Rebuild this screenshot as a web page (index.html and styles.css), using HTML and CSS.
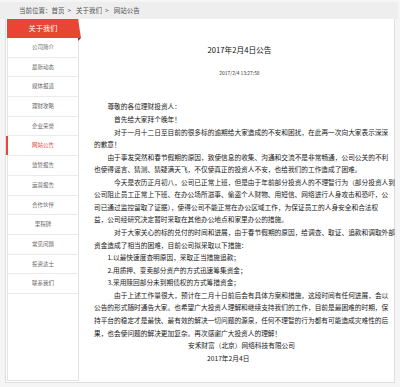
FILE: index.html
```html
<!DOCTYPE html>
<html lang="zh-CN">
<head>
<meta charset="utf-8">
<title>网站公告</title>
<link rel="stylesheet" href="styles.css">
</head>
<body>
<div class="page">
  <div class="crumb">当前位置：<span class="lnk">首页</span><span class="sep">&gt;</span><span class="lnk">关于我们</span><span class="sep">&gt;</span><span class="lnk">网站公告</span></div>
  <div class="main">
    <aside class="side">
      <div class="side-top">
        <div class="side-head">关于我们</div>
        <i class="fold"></i>
      </div>
      <ul class="nav">
        <li>公司简介</li>
        <li>最新动态</li>
        <li>媒体报道</li>
        <li>理财攻略</li>
        <li>企业荣誉</li>
        <li class="on">网站公告</li>
        <li>监管报告</li>
        <li>运营报告</li>
        <li>合作伙伴</li>
        <li>里程碑</li>
        <li>常见问题</li>
        <li>投资达士</li>
        <li>联系我们</li>
      </ul>
    </aside>
    <section class="content">
      <h1 class="title">2017年2月4日公告</h1>
      <div class="date">2017/2/4 13:27:58</div>
      <div class="text">
        <p class="i2">尊敬的各位理财投资人：</p>
        <p class="i3">首先给大家拜个晚年！</p>
        <p class="i3">对于一月十二日至目前的很多标的逾期给大家造成的不安和困扰，在此再一次向大家表示深深<br>的歉意！</p>
        <p class="i2">由于事发突然和春节假期的原因，致使信息的收集、沟通和交流不是非常畅通，公司公关的不利<br>也使得谣言、猜测、猜疑满天飞，不仅使真正的投资人不安，也给我们的工作造成了困难。</p>
        <p class="i3">今天是农历正月初八，公司已正常上班，但是由于年前部分投资人的不理智行为（部分投资人到<br>公司阻止员工正常上下班、在办公场所滋事、偷盗个人财物、用短信、网络进行人身攻击和恐吓，公<br>司已通过监控留取了证据），使得公司不能正常在办公区域工作，为保证员工的人身安全和合法权<br>益，公司经研究决定暂时采取在其他办公地点和家里办公的措施。</p>
        <p class="i3">对于大家关心的标的兑付的时间和进展，由于春节假期的原因，给调查、取证、追款和调取外部<br>资金造成了相当的困难，目前公司拟采取以下措施：</p>
        <p class="i2">1.以最快速度查明原因，采取正当措施追款；</p>
        <p class="i2">2.用质押、变卖部分资产的方式迅速筹集资金；</p>
        <p class="i2">3.采用赎回部分未到期债权的方式筹措资金；</p>
        <p class="i3">由于上述工作量很大，预计在二月十日前后会有具体方案和措施，这段时间有任何进展，会以<br>公告的形式随时通告大家。也希望广大投资人理解和继续支持我们的工作，目前是最困难的时期，保<br>持平台的稳定才是最快、最有效的解决一切问题的源泉，任何不理智的行为都有可能造成灾难性的后<br>果，也会使问题的解决更加复杂。再次感谢广大投资人的理解！</p>
        <p class="sign">安禾财富（北京）网络科技有限公司</p>
        <p class="sign-date">2017年2月4日</p>
      </div>
    </section>
  </div>
</div>
</body>
</html>
```

FILE: styles.css
```css
html, body {
  margin: 0;
  padding: 0;
}
body {
  width: 400px;
  height: 387px;
  overflow: hidden;
  background: #f5f5f5;
  font-family: "Noto Sans CJK SC", "Noto Sans", sans-serif;
  color: #333;
}
.page {
  padding-top: 2px;
}
.crumb {
  height: 17px;
  margin-right: 2px;
  background: #eeeeee;
  padding-left: 19px;
  font-size: 6.5px;
  line-height: 17px;
  color: #555;
}
.sep {
  margin: 0 5px 0 3px;
}
.main {
  display: flex;
  box-sizing: border-box;
  margin-left: 5px;
  width: 390px;
  height: 364px;
  padding: 0 0 1px 1px;
  background: #fff;
  border: 1px solid #dedede;
  border-top: none;
}
.side {
  width: 72px;
  flex: none;
  box-sizing: border-box;
  border: 1px solid #e3e3e3;
  border-top: none;
}
.side-top {
  position: relative;
  height: 19px;
}
.side-head {
  height: 19px;
  width: 74px;
  margin-left: -1px;
  padding-right: 2px;
  box-sizing: border-box;
  background: #e74634;
  clip-path: polygon(0 0, 71px 0, 74px 100%, 0 100%);
  color: #fff;
  font-size: 7.2px;
  line-height: 19px;
  text-align: center;
}
.fold {
  position: absolute;
  left: 70px;
  top: 19px;
  width: 0;
  height: 0;
  border-top: 3px solid #9e2a1e;
  border-right: 3px solid transparent;
}
.nav {
  list-style: none;
  margin: 0;
  padding: 0;
}
.nav li {
  height: 18.7px;
  line-height: 18.7px;
  border-bottom: 1px solid #ebebeb;
  text-align: center;
  font-size: 5.5px;
  color: #666;
}
.nav li.on {
  position: relative;
  color: #e74634;
}
.nav li.on::before {
  content: "";
  position: absolute;
  left: -2px;
  top: 0;
  width: 2px;
  height: 100%;
  background: #e74634;
}
.content {
  flex: 1;
  padding-top: 25px;
}
.title {
  margin: 0;
  padding-left: 5px;
  font-size: 7.7px;
  line-height: 12px;
  font-weight: normal;
  text-align: center;
  color: #111;
}
.date {
  margin-top: 13px;
  padding-left: 5px;
  font-size: 4.9px;
  line-height: 8px;
  text-align: center;
  color: #333;
}
.text {
  margin-top: 23.4px;
  padding-left: 15px;
  font-size: 6.7px;
  line-height: 12.57px;
  color: #1a1a1a;
  white-space: nowrap;
}
.text p {
  margin: 0;
}
.i2 {
  text-indent: 2em;
}
.i3 {
  text-indent: 3em;
}
.sign {
  padding-left: 94px;
}
.sign-date {
  padding-left: 113px;
}
```
